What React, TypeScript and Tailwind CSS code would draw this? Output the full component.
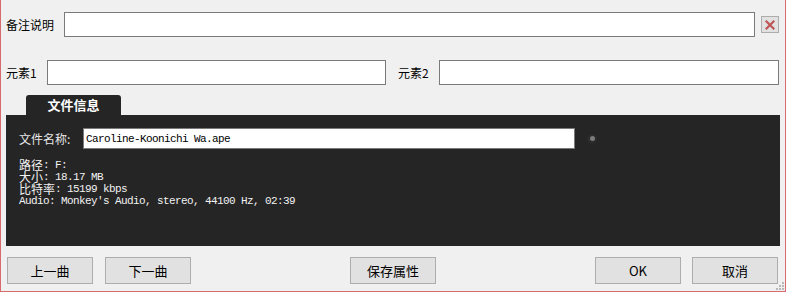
import React from "react";

const cjk = "font-['Noto_Sans_CJK_SC','Noto_Sans',sans-serif]";

function Mixed({ text }: { text: string }) {
  const parts = text.match(/[\u3000-\u9fff\uff00-\uffef]+|[^\u3000-\u9fff\uff00-\uffef]+/g) || [];
  return (
    <>
      {parts.map((p, i) =>
        /[\u3000-\u9fff\uff00-\uffef]/.test(p) ? (
          <span key={i} className="font-['Noto_Sans_CJK_SC',sans-serif] text-[12px] leading-[12px]">
            {p}
          </span>
        ) : (
          <span key={i} className="font-['Liberation_Mono',monospace] text-[11px] leading-[12px] tracking-[-0.6px] whitespace-pre">
            {p}
          </span>
        )
      )}
    </>
  );
}

function Btn({ label, w = "w-[86px]" }: { label: string; w?: string }) {
  return (
    <div
      className={`${w} h-[27px] bg-[#e1e1e1] border border-[#adadad] flex items-center justify-center text-[13px] text-black ${cjk}`}
    >
      {label}
    </div>
  );
}

export default function App() {
  return (
    <div className="relative w-[786px] h-[292px] bg-[#f0f0f0] border-l border-r border-b border-[#d86b6e] overflow-hidden">
      {/* Row 1 */}
      <div className="flex items-center h-[25px] mt-[12px] pl-[5px]">
        <div className={`w-[58px] text-[12px] text-black ${cjk}`}>备注说明</div>
        <div className="w-[691px] h-[25px] bg-white border border-[#7a7a7a]" />
        <div className="ml-[6px] w-[18px] h-[17px] bg-[#e1e1e1] border border-[#adadad] flex items-center justify-center">
          <svg width="10" height="10" viewBox="0 0 10 10">
            <path d="M1.5 1.5 L8.5 8.5 M8.5 1.5 L1.5 8.5" stroke="#bf5656" strokeWidth="2.2" strokeLinecap="square" />
          </svg>
        </div>
      </div>

      {/* Row 2 */}
      <div className="flex items-center h-[25px] mt-[23px] pl-[5px]">
        <div className={`w-[41px] text-[12px] text-black ${cjk}`}>元素1</div>
        <div className="w-[339px] h-[25px] bg-white border border-[#7a7a7a]" />
        <div className={`ml-[12px] w-[41px] text-[12px] text-black ${cjk}`}>元素2</div>
        <div className="w-[340px] h-[25px] bg-white border border-[#7a7a7a]" />
      </div>

      {/* Tab */}
      <div className="mt-[10px] pl-[25px] flex">
        <div
          className={`w-[95px] h-[20px] bg-[#252525] rounded-t-[3px] flex items-center justify-center text-white font-bold text-[13px] ${cjk}`}
        >
          文件信息
        </div>
      </div>

      {/* Panel */}
      <div className="ml-[5px] w-[774px] h-[131px] bg-[#252525] pl-[13px] pt-[13px]">
        <div className="flex items-center h-[21px]">
          <div className={`w-[64px] text-[12px] text-[#e8e8e8] ${cjk}`}>文件名称:</div>
          <div className="w-[492px] h-[21px] bg-white border border-[#7a7a7a] flex items-center pl-[2px] text-black">
            <Mixed text="Caroline-Koonichi Wa.ape" />
          </div>
          <div className="ml-[12px] w-[10px] h-[10px] rounded-full bg-[#2b2b2b] flex items-center justify-center">
            <div className="w-[5px] h-[5px] rounded-full bg-[#7c7c7c]" />
          </div>
        </div>
        <div className="mt-[10px] text-[#f2f2f2]">
          <div className="h-[12px] flex items-center overflow-visible"><Mixed text="路径: F:" /></div>
          <div className="h-[12px] flex items-center overflow-visible"><Mixed text="大小: 18.17 MB" /></div>
          <div className="h-[12px] flex items-center overflow-visible"><Mixed text="比特率: 15199 kbps" /></div>
          <div className="h-[12px] flex items-center overflow-visible"><Mixed text="Audio: Monkey's Audio, stereo, 44100 Hz, 02:39" /></div>
        </div>
      </div>

      {/* Buttons */}
      <div className="flex mt-[11px] pl-[6px]">
        <Btn label="上一曲" />
        <div className="ml-[12px]"><Btn label="下一曲" /></div>
        <div className="ml-[159px]"><Btn label="保存属性" /></div>
        <div className="ml-[159px]"><Btn label="OK" /></div>
        <div className="ml-[11px]"><Btn label="取消" /></div>
      </div>

      {/* Resize grip */}
      <svg className="absolute right-[1px] bottom-[1px]" width="8" height="8" viewBox="0 0 8 8">
        <rect x="6" y="0" width="2" height="2" fill="#b8b8b8" />
        <rect x="3" y="3" width="2" height="2" fill="#b8b8b8" />
        <rect x="6" y="3" width="2" height="2" fill="#b8b8b8" />
        <rect x="0" y="6" width="2" height="2" fill="#b8b8b8" />
        <rect x="3" y="6" width="2" height="2" fill="#b8b8b8" />
        <rect x="6" y="6" width="2" height="2" fill="#b8b8b8" />
      </svg>
    </div>
  );
}
